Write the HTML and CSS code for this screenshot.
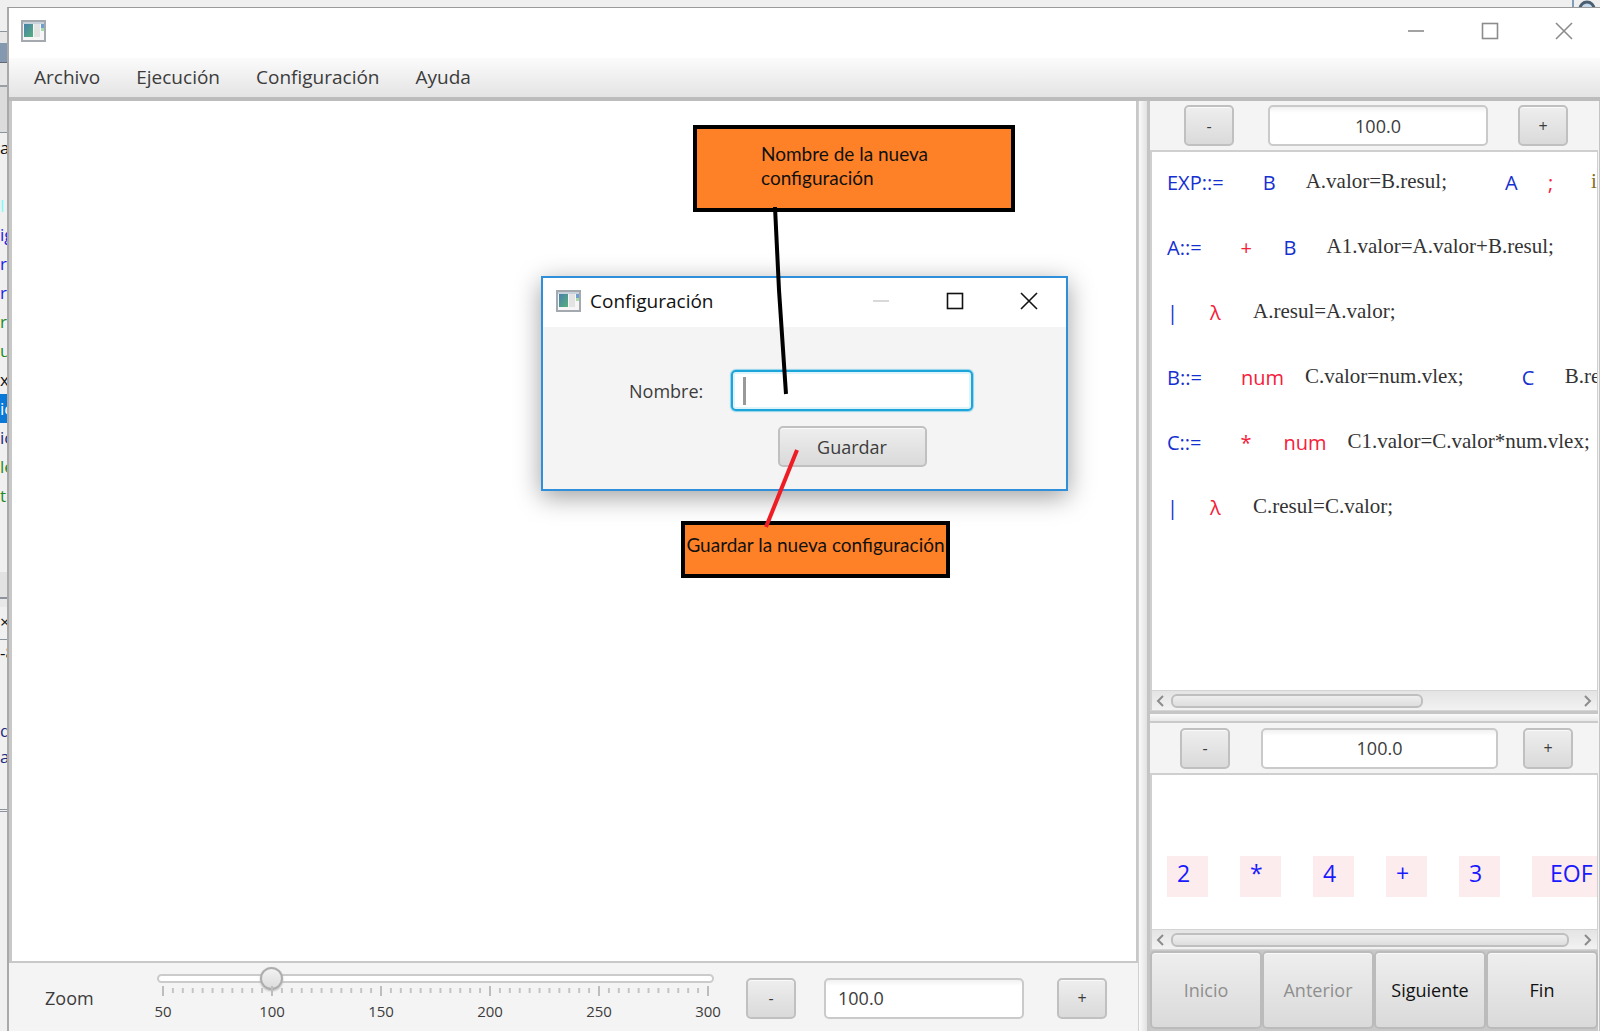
FILE: index.html
```html
<!DOCTYPE html>
<html lang="es">
<head>
<meta charset="utf-8">
<title>Configuración</title>
<link rel="stylesheet" href="styles.css">
</head>
<body>
<svg class="defs" width="0" height="0" aria-hidden="true">
  <defs>
    <linearGradient id="teal" x1="0" y1="0" x2="1" y2="1">
      <stop offset="0" stop-color="#4a7fae"/><stop offset="1" stop-color="#55b07a"/>
    </linearGradient>
    <symbol id="app-icon" viewBox="0 0 25 22">
      <rect x="1" y="1" width="23" height="20" fill="#f6f6f6" stroke="#a3a9ae" stroke-width="2"/>
      <path d="M2 3h21" stroke="#c9d2da" stroke-width="2"/>
      <rect x="3" y="4" width="9" height="13" fill="url(#teal)"/>
      <rect x="13" y="4" width="6" height="13" fill="#e3e3e3"/>
      <rect x="20" y="4" width="3" height="5" fill="#6f9fd0"/>
      <rect x="20" y="8" width="3" height="3" fill="#a5dca9"/>
    </symbol>
    <symbol id="win-min" viewBox="0 0 18 18"><path d="M1 9h16" stroke="currentColor" stroke-width="1.6"/></symbol>
    <symbol id="win-max" viewBox="0 0 18 18"><rect x="1.5" y="1.5" width="15" height="15" fill="none" stroke="currentColor" stroke-width="1.6"/></symbol>
    <symbol id="win-close" viewBox="0 0 18 18"><path d="M1 1l16 16M17 1L1 17" stroke="currentColor" stroke-width="1.6"/></symbol>
    <symbol id="chev-left" viewBox="0 0 8 12"><path d="M7 1L2 6l5 5" fill="none" stroke="#8c8c8c" stroke-width="2"/></symbol>
    <symbol id="chev-right" viewBox="0 0 8 12"><path d="M1 1l5 5-5 5" fill="none" stroke="#8c8c8c" stroke-width="2"/></symbol>
  </defs>
</svg>

<div class="ide">
  <div class="ide-menu">
    <span>Refactor</span><span>Run</span><span>Debug</span><span>Profile</span><span>Team</span><span>Tools</span><span>Window</span><span>Help</span>
    <svg class="ide-search" width="28" height="20" viewBox="0 0 28 20"><path d="M1 0v20" stroke="#7f9db9" stroke-width="2"/><circle cx="15" cy="9" r="7" fill="#c5d9ea" stroke="#4a5f72" stroke-width="3"/></svg>
  </div>
  <div class="ide-tools"><i></i></div>
  <div class="ide-tabs"></div>
  <div class="ide-code">
    <span>a</span><span></span><span class="cyan">l</span><span class="blue">ig</span><span class="blue">re</span><span class="blue">re</span><span class="green">ri</span><span class="green">u</span><span>xr</span><span class="selected">ic</span><span class="navy">ic</span><span class="green">le</span><span class="green">tr</span>
  </div>
  <div class="ide-gap"></div>
  <div class="ide-out-tab">×</div>
  <div class="ide-out"><span>-8</span><span></span><span></span><span class="navy">d</span><span class="navy">ar</span></div>
</div>

<div class="app">
  <header class="titlebar">
    <svg class="icon" width="25" height="22"><use href="#app-icon"/></svg>
    <div class="win-controls">
      <button aria-label="Minimizar"><svg width="18" height="18"><use href="#win-min"/></svg></button>
      <button aria-label="Maximizar"><svg width="18" height="18"><use href="#win-max"/></svg></button>
      <button aria-label="Cerrar"><svg width="18" height="18"><use href="#win-close"/></svg></button>
    </div>
  </header>
  <nav class="menubar">
    <button>Archivo</button><button>Ejecución</button><button>Configuración</button><button>Ayuda</button>
  </nav>

  <main class="split">
    <section class="left">
      <div class="canvas"></div>
      <div class="zoombar">
        <label for="zoom">Zoom</label>
        <div class="slider">
          <div class="rail">
            <span class="track"></span>
            <input id="zoom" type="range" min="50" max="300" value="100">
          </div>
          <svg class="ticks" height="10" viewBox="0 0 550 10" preserveAspectRatio="none">
            <defs><pattern id="minor" width="110" height="10" patternUnits="userSpaceOnUse"><path d="M10 2v5M20 2v5M30 2v5M40 2v5M50 2v5M60 2v5M70 2v5M80 2v5M90 2v5M100 2v5" stroke="#c4c4c4" stroke-width="2"/></pattern></defs>
            <rect width="550" height="10" fill="url(#minor)"/>
            <path d="M0 0v10M110 0v10M220 0v10M330 0v10M440 0v10M550 0v10" stroke="#bdbdbd" stroke-width="2"/>
          </svg>
          <div class="labels"><span>50</span><span>100</span><span>150</span><span>200</span><span>250</span><span>300</span></div>
        </div>
        <button class="btn step">-</button>
        <input class="field" type="text" value="100.0" aria-label="Zoom del árbol">
        <button class="btn step">+</button>
      </div>
    </section>

    <div class="divider-v"></div>

    <section class="right">
      <div class="toolbar wide">
        <button class="btn step">-</button>
        <input class="field center" type="text" value="100.0" aria-label="Zoom de la gramática">
        <button class="btn step">+</button>
      </div>
      <div class="grammar">
        <p><span class="lhs">EXP::=</span><span class="sym nt">B</span><span class="act">A.valor=B.resul;</span><span class="sym nt">A</span><span class="sym">;</span><span class="act end">i</span></p>
        <p><span class="lhs">A::=</span><span class="sym">+</span><span class="sym nt">B</span><span class="act">A1.valor=A.valor+B.resul;</span></p>
        <p><span class="lhs alt">|</span><span class="sym">λ</span><span class="act">A.resul=A.valor;</span></p>
        <p><span class="lhs">B::=</span><span class="sym word">num</span><span class="act">C.valor=num.vlex;</span><span class="sym nt">C</span><span class="act">B.re</span></p>
        <p><span class="lhs">C::=</span><span class="sym">*</span><span class="sym word">num</span><span class="act">C1.valor=C.valor*num.vlex;</span></p>
        <p><span class="lhs alt">|</span><span class="sym">λ</span><span class="act">C.resul=C.valor;</span></p>
      </div>
      <div class="scrollbar"><svg width="8" height="12"><use href="#chev-left"/></svg><div class="lane"><span class="thumb" style="width:62%"></span></div><svg width="8" height="12"><use href="#chev-right"/></svg></div>
      <div class="divider-h"></div>
      <div class="toolbar">
        <button class="btn step">-</button>
        <input class="field center" type="text" value="100.0" aria-label="Zoom de la entrada">
        <button class="btn step">+</button>
      </div>
      <div class="tokens"><span>2</span><span>*</span><span>4</span><span>+</span><span>3</span><span class="eof">EOF</span></div>
      <div class="scrollbar"><svg width="8" height="12"><use href="#chev-left"/></svg><div class="lane"><span class="thumb" style="width:98%"></span></div><svg width="8" height="12"><use href="#chev-right"/></svg></div>
      <div class="steps">
        <button class="btn" disabled>Inicio</button><button class="btn" disabled>Anterior</button><button class="btn">Siguiente</button><button class="btn">Fin</button>
      </div>
    </section>
  </main>
</div>

<div class="dialog" role="dialog" aria-labelledby="dialog-title">
  <header class="dialog-title">
    <svg class="icon" width="25" height="22"><use href="#app-icon"/></svg>
    <span id="dialog-title">Configuración</span>
    <div class="win-controls">
      <button disabled aria-label="Minimizar"><svg width="18" height="18"><use href="#win-min"/></svg></button>
      <button aria-label="Maximizar"><svg width="18" height="18"><use href="#win-max"/></svg></button>
      <button aria-label="Cerrar"><svg width="18" height="18"><use href="#win-close"/></svg></button>
    </div>
  </header>
  <form class="dialog-body">
    <label for="nombre">Nombre:</label>
    <input id="nombre" class="field focused" type="text">
    <button class="btn save" type="button">Guardar</button>
  </form>
</div>

<div class="callout name">Nombre de la nueva configuración</div>
<div class="callout saving">Guardar la nueva configuración</div>
<svg class="pointers" width="60" height="340" viewBox="750 200 60 340" aria-hidden="true">
  <path d="M775 207L779 290L786 394" fill="none" stroke="#000" stroke-width="4"/>
  <path d="M797 450L766 527" stroke="#ee1c24" stroke-width="4"/>
</svg>
</body>
</html>
```

FILE: styles.css
```css
* { box-sizing: border-box; }

body {
  margin: 0;
  min-height: 100vh;
  position: relative;
  overflow: hidden;
  background: #f0f0f0;
  color: #3c3c3c;
  font: 18px/24px "Open Sans", "Noto Sans", sans-serif;
}

button, input { font: inherit; color: inherit; margin: 0; }
.defs { position: absolute; }

/* Editor window behind the application */
.ide {
  position: absolute;
  inset: 0;
  overflow: hidden;
  color: #111;
  font-size: 17px;
  line-height: 29px;
}
.ide-menu { display: flex; gap: 16px; height: 32px; padding-left: 10px; border-bottom: 1px solid #8d939c; background: #efefef; line-height: 25px; }
.ide-search { margin-left: auto; }
.ide-tools { height: 55px; padding-top: 11px; border-bottom: 2px solid #9a9ea6; background: #e6e6e6; }
.ide-tools i { display: block; width: 8px; height: 20px; background: #8499b0; border-bottom: 1px solid #667; }
.ide-tabs { height: 46px; border-bottom: 1px solid #8d939c; background: #dcdcdc; }
.ide-code { display: flex; flex-direction: column; height: 439px; }
.ide-code span { height: 29px; }
.ide-gap { height: 27px; border-bottom: 2px solid #8d939c; background: #e2e2e2; }
.ide-out-tab { height: 41px; border-top: 8px solid #e8e8e8; border-bottom: 1px solid #8d939c; }
.ide-out { display: flex; flex-direction: column; height: 172px; border-bottom: 3px double #8d939c; line-height: 26px; }
.ide-out span { height: 26px; }
.cyan { color: #7ff; }
.blue { color: #1a1ae6; }
.green { color: #1d8a1d; }
.navy { color: #1b2a80; }
.selected { background: #0a78d7; color: #fff; }

/* Application window */
.app {
  position: relative;
  display: flex;
  flex-direction: column;
  height: calc(100vh - 7px);
  margin: 7px 0 0 7px;
  border-top: 1px solid #9a9a9a;
  border-left: 2px solid #a9a9a9;
  background: #f4f4f4;
}
.titlebar { display: flex; align-items: center; height: 50px; padding: 0 27px 4px 12px; background: #fff; color: #8c8c8c; }
.win-controls { display: flex; gap: 56px; margin-left: auto; }
.win-controls button { display: flex; padding: 0; border: 0; background: none; }
.menubar {
  display: flex;
  gap: 36px;
  height: 43px;
  padding: 0 25px 2px;
  border-bottom: 4px solid #bcbcbc;
  background: linear-gradient(#fbfbfb, #e4e4e4);
  font-size: 19px;
}
.menubar button { padding: 0; border: 0; background: none; }

.split { display: flex; flex: 1; min-height: 0; }
.left { display: flex; flex-direction: column; flex: 1; min-width: 0; }
.canvas { flex: 1; border: solid #c8c8c8; border-width: 0 2px 2px 3px; background: #fff; }
.divider-v {
  width: 12px;
  border-right: 3px solid #c4c4c4;
  border-left: 1px solid #d0d0d0;
  background: linear-gradient(90deg, #fafafa, #e2e2e2);
}
.right { display: flex; flex-direction: column; width: 450px; padding-right: 1px; border-right: 1px solid #c4c4c4; }

/* Controls */
.btn {
  padding: 0;
  border: 2px solid #c0c0c0;
  border-radius: 5px;
  background: linear-gradient(#eeeeee, #dadada);
  box-shadow: inset 0 1px #fafafa;
}
.step { flex: none; width: 50px; height: 41px; font-size: 16px; }
.field {
  min-width: 0;
  height: 41px;
  padding: 0 12px;
  border: 2px solid #cacaca;
  border-radius: 5px;
  background: linear-gradient(#f1f1f1, #fff 6px);
}
.center { text-align: center; }
.field.focused {
  border-color: #1ba5d8;
  outline: 0;
  background: linear-gradient(#999, #999) 10px 5px / 3px 28px no-repeat #fff;
  box-shadow: 0 0 1px 1px #8fd3ec, inset 0 0 0 2px #dff3fa;
}

.zoombar { display: flex; align-items: center; height: 68px; padding: 2px 31px 0 36px; }
.zoombar > label { width: 100px; }
.slider { flex: 1; padding-bottom: 4px; }
.rail { display: grid; align-items: center; margin: 0 6px; }
.rail > * { grid-area: 1 / 1; }
.track { height: 9px; margin: 0 6px; border: 2px solid #cbcbcb; border-radius: 5px; background: #fff; }
.rail input { appearance: none; width: 100%; height: 23px; background: none; }
.rail input::-webkit-slider-thumb {
  appearance: none;
  width: 23px;
  height: 23px;
  border: 2px solid #adadad;
  border-radius: 50%;
  background: linear-gradient(#f2f2f2, #dcdcdc);
  box-shadow: 0 1px 2px #bbb;
}
.ticks { display: block; width: calc(100% - 36px); margin: -4px 18px 0; overflow: visible; }
.labels { display: flex; justify-content: space-between; padding: 0 1px; font-size: 15px; line-height: 30px; }
.labels span { width: 34px; text-align: center; }
.zoombar .step { margin-left: 20px; }
.zoombar .field { width: 200px; margin-left: 28px; }
.zoombar .field + .step { margin-left: 33px; }

.toolbar { display: flex; align-items: center; gap: 31px; height: 52px; padding: 0 25px 0 30px; border-bottom: 2px solid #cfcfcf; }
.toolbar .field { flex: 1; margin-right: -6px; }
.toolbar.wide { gap: 34px; padding: 0 30px 0 34px; height: 51px; }
.toolbar.wide .field { margin-right: -4px; }

.grammar { flex: 1; min-height: 0; overflow: hidden; padding-left: 15px; border-left: 2px solid #cfcfcf; border-right: 1px solid #cfcfcf; background: #fff; white-space: nowrap; }
.grammar p { display: flex; align-items: center; height: 65px; margin: 0; padding-bottom: 4px; font-size: 20px; }
.lhs { padding-right: 39px; color: #1530d0; }
.lhs.alt { padding-right: 32px; }
.sym { flex: none; width: 43px; color: #f5203a; }
.sym.nt { color: #1530d0; }
.sym.word { width: 64px; }
.act { padding: 0 58px 4px 0; color: #333; font: 21px/24px "Liberation Serif", serif; }
.act.end { color: #8a6d1a; }

.scrollbar { display: flex; align-items: center; gap: 7px; height: 21px; padding: 0 5px 0 4px; border: 1px solid #d4d4d4; border-left: 2px solid #cfcfcf; background: linear-gradient(#e4e4e4, #f2f2f2); }
.lane { display: flex; flex: 1; }
.thumb { height: 14px; border: 2px solid #bfbfbf; border-radius: 6px; background: linear-gradient(#eee, #dedede); }
.divider-h { height: 12px; border-top: 3px solid #c6c6c6; border-bottom: 2px solid #cacaca; background: linear-gradient(#fafafa, #e8e8e8); }

.tokens { display: flex; gap: 32px; height: 154px; padding: 81px 0 0 15px; overflow: hidden; border-left: 2px solid #cfcfcf; border-right: 1px solid #cfcfcf; background: #fff; color: #1a1aff; font-size: 23px; line-height: 35px; }
.tokens span { flex: none; width: 41px; height: 41px; padding-left: 10px; background: #fdecee; }
.tokens .eof { width: 80px; padding-left: 18px; }

.steps { display: flex; height: 81px; padding: 1px 0 2px; background: #c8c8c8; }
.steps .btn { flex: 1; color: #111; border-color: #bbb; }
.steps .btn:disabled { color: #8f8f8f; }

/* Configuration dialog, floating over the canvas */
.dialog {
  position: absolute;
  left: 541px;
  top: 276px;
  width: 527px;
  border: 2px solid #2f8fdb;
  background: #f4f4f4;
  box-shadow: 0 6px 24px rgba(0, 0, 0, .38);
}
.dialog-title { display: flex; align-items: center; gap: 9px; height: 49px; padding: 0 28px 3px 13px; background: #fff; color: #111; font-size: 19px; }
.dialog-title button:disabled { color: #d0d0d0; }
.dialog-body {
  display: grid;
  grid-template-columns: 74px 242px;
  gap: 15px 28px;
  align-items: center;
  padding: 43px 0 22px 86px;
}
.save { grid-column: 2; justify-self: center; width: 149px; height: 41px; }

/* Notes drawn over the windows */
.callout { position: absolute; border: 4px solid #000; background: #ff8127; color: #111; font: 19px/24px Lato, sans-serif; }
.name { left: 693px; top: 125px; width: 322px; height: 87px; padding: 13px 64px; }
.saving { left: 681px; top: 521px; width: 269px; height: 57px; padding: 8px 0; text-align: center; white-space: nowrap; }
.pointers { position: absolute; left: 750px; top: 200px; }
```
